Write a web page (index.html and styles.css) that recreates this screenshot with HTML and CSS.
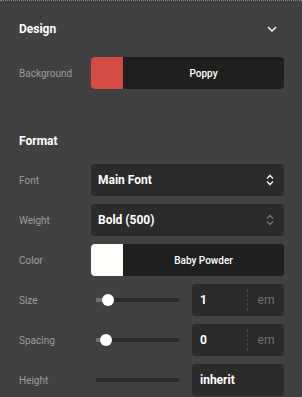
FILE: index.html
```html
<!DOCTYPE html>
<html lang="en">
<head>
    <meta charset="UTF-8">
    <meta name="viewport" content="width=device-width, initial-scale=1.0">
    <title>Design panel</title>
    <link rel="stylesheet" href="styles.css">
</head>
<body>
    <div class="panel">
        <div class="section-head first">
            <h2>Design</h2>
            <svg class="collapse" width="10" height="6" viewBox="0 0 10 6">
                <path d="M1 1 L5 5 L9 1" fill="none" stroke="#fff" stroke-width="1.4"/>
            </svg>
        </div>

        <div class="row">
            <label>Background</label>
            <div class="swatch-field">
                <span class="swatch poppy"></span>
                <span class="swatch-name">Poppy</span>
            </div>
        </div>

        <div class="section-head">
            <h2>Format</h2>
        </div>

        <div class="row">
            <label>Font</label>
            <div class="select">
                <span>Main Font</span>
                <svg class="updown" width="8" height="12" viewBox="0 0 8 12">
                    <path d="M1 4.5 L4 1.5 L7 4.5 M1 7.5 L4 10.5 L7 7.5" fill="none" stroke="#fff" stroke-width="1.3"/>
                </svg>
            </div>
        </div>

        <div class="row">
            <label>Weight</label>
            <div class="select">
                <span>Bold (500)</span>
                <svg class="updown dim" width="8" height="12" viewBox="0 0 8 12">
                    <path d="M1 4.5 L4 1.5 L7 4.5 M1 7.5 L4 10.5 L7 7.5" fill="none" stroke="#777" stroke-width="1.3"/>
                </svg>
            </div>
        </div>

        <div class="row">
            <label>Color</label>
            <div class="swatch-field">
                <span class="swatch powder"></span>
                <span class="swatch-name">Baby Powder</span>
            </div>
        </div>

        <div class="row slider-row">
            <label>Size</label>
            <div class="slider">
                <div class="track"><div class="fill" style="width: 12px"></div><div class="thumb" style="left: 12px"></div></div>
            </div>
            <div class="number">
                <span class="value">1</span>
                <span class="unit">em</span>
            </div>
        </div>

        <div class="row slider-row">
            <label>Spacing</label>
            <div class="slider">
                <div class="track"><div class="fill" style="width: 10px"></div><div class="thumb" style="left: 10px"></div></div>
            </div>
            <div class="number">
                <span class="value">0</span>
                <span class="unit">em</span>
            </div>
        </div>

        <div class="row slider-row">
            <label>Height</label>
            <div class="slider">
                <div class="track"></div>
            </div>
            <div class="number">
                <span class="value">inherit</span>
            </div>
        </div>
    </div>
</body>
</html>
```

FILE: styles.css
```css
html, body {
    margin: 0;
    height: 100%;
}
body {
    background: #414141;
    font-family: Roboto, "Liberation Sans", sans-serif;
    color: #fff;
    border-top: 1px dotted #8a8a8a;
    box-sizing: border-box;
    overflow: hidden;
}
.panel {
    padding: 0 18px 0 19px;
}
.section-head {
    display: flex;
    align-items: center;
    justify-content: space-between;
    height: 22px;
    margin: 41px 0 12px;
}
.section-head.first {
    margin: 17px 0 17px;
}
.section-head h2 {
    margin: 0;
    font-size: 12px;
    font-weight: 700;
}
.collapse {
    margin-right: 7px;
}
.row {
    display: grid;
    grid-template-columns: 72px 1fr;
    align-items: center;
    height: 32px;
    margin-bottom: 8px;
}
.row label {
    font-size: 10px;
    color: #9b9b9b;
}
.swatch-field {
    display: flex;
    height: 32px;
    border-radius: 4px;
    overflow: hidden;
    background: #1f1f1f;
}
.swatch {
    width: 32px;
}
.swatch.poppy {
    background: #d44a44;
}
.swatch.powder {
    background: #fdfdf9;
}
.swatch-name {
    flex: 1;
    display: flex;
    align-items: center;
    justify-content: center;
    font-size: 10px;
    font-weight: 500;
}
.select {
    display: flex;
    align-items: center;
    justify-content: space-between;
    height: 32px;
    padding: 0 10px 0 7px;
    border-radius: 4px;
    background: #2b2b2b;
    font-size: 12px;
    font-weight: 700;
}
.slider-row {
    grid-template-columns: 72px 101px 1fr;
}
.slider {
    padding-left: 5px;
}
.track {
    position: relative;
    width: 83px;
    height: 4px;
    background: #2b2b2b;
}
.fill {
    height: 4px;
    background: #707070;
}
.thumb {
    position: absolute;
    top: -4px;
    width: 12px;
    height: 12px;
    margin-left: -6px;
    border-radius: 50%;
    background: #fff;
}
.number {
    display: flex;
    align-items: center;
    height: 32px;
    border-radius: 4px;
    background: #2b2b2b;
    font-size: 12px;
}
.value {
    flex: 1;
    padding-left: 8px;
    font-weight: 700;
}
.unit {
    width: 36px;
    height: 22px;
    line-height: 22px;
    text-align: center;
    color: #707070;
    border-left: 1px dashed #4a4a4a;
}
```
